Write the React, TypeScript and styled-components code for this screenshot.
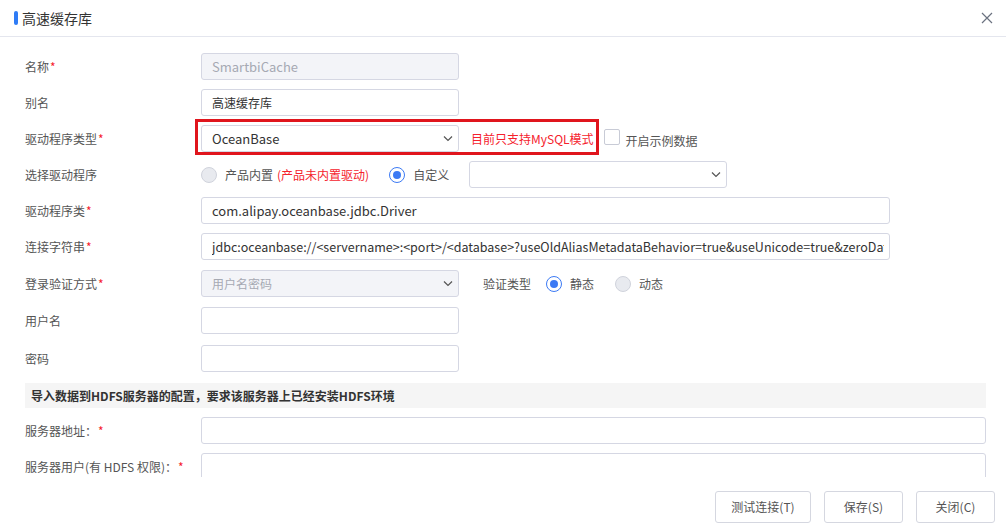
import React from "react";
import styled, { createGlobalStyle } from "styled-components";

const GlobalStyle = createGlobalStyle`
  html, body {
    margin: 0;
    padding: 0;
    background: #ffffff;
  }
  body {
    font-family: "Noto Sans CJK SC", "Noto Sans", sans-serif;
    font-size: 12px;
    color: #333;
  }
`;

const Dialog = styled.div`
  width: 1006px;
  height: 524px;
  display: flex;
  flex-direction: column;
  background: #fff;
  overflow: hidden;
`;

const Header = styled.div`
  height: 36px;
  flex: none;
  display: flex;
  align-items: center;
  justify-content: space-between;
  padding: 0 12px 0 14px;
  border-bottom: 1px solid #e4e6ee;
`;

const Title = styled.div`
  display: flex;
  align-items: center;
  gap: 4px;
  font-size: 14px;
  color: #333;
`;

const TitleBar = styled.span`
  width: 4px;
  height: 14px;
  border-radius: 2px;
  background: #2f7cf6;
`;

const CloseButton = styled.button`
  border: none;
  background: none;
  padding: 0;
  width: 14px;
  height: 14px;
  display: flex;
  align-items: center;
  justify-content: center;
  cursor: pointer;
`;

const Body = styled.div`
  flex: 1;
  overflow: hidden;
  padding: 16px 20px 0 25px;
  display: flex;
  flex-direction: column;
  gap: 9px;
`;

const Row = styled.div<{ $mt?: number }>`
  display: flex;
  align-items: center;
  height: 27px;
  flex: none;
  margin-top: ${({ $mt }) => $mt || 0}px;
`;

const Label = styled.div`
  width: 176px;
  flex: none;
  color: #555;
  font-size: 12px;
  white-space: nowrap;
`;

const Star = styled.span`
  color: #f5222d;
  margin-left: 1px;
`;

const Input = styled.div<{ $w?: number; $disabled?: boolean; $grow?: boolean; $fs?: number }>`
  box-sizing: border-box;
  height: 27px;
  width: ${({ $w, $grow }) => ($grow ? "auto" : `${$w || 258}px`)};
  flex: ${({ $grow }) => ($grow ? 1 : "none")};
  border: 1px solid #d5d7e3;
  border-radius: 3px;
  background: ${({ $disabled }) => ($disabled ? "#f3f4f8" : "#fff")};
  color: ${({ $disabled }) => ($disabled ? "#a6a9b3" : "#333")};
  padding: 0 5px 0 10px;
  display: flex;
  align-items: center;
  justify-content: space-between;
  white-space: nowrap;
  overflow: hidden;
  font-size: ${({ $fs }) => $fs || 13}px;
`;

const InputText = styled.span`
  overflow: hidden;
  text-overflow: clip;
  white-space: nowrap;
`;

const Highlight = styled.div`
  position: relative;
  display: flex;
  align-items: center;
  &::after {
    content: "";
    position: absolute;
    left: -6px;
    top: -6px;
    right: 0;
    bottom: -3px;
    border: 3px solid #e0151d;
    pointer-events: none;
  }
`;

const Notice = styled.span`
  color: #f5222d;
  margin-left: 12px;
  margin-right: 5px;
`;

const CheckBox = styled.span`
  box-sizing: border-box;
  width: 16px;
  height: 16px;
  border: 1px solid #c8cbd6;
  border-radius: 2px;
  background: #fff;
  margin-left: 5px;
  margin-top: -3px;
  flex: none;
`;

const CheckLabel = styled.span`
  margin-left: 6px;
  margin-top: 4px;
  color: #555;
`;

const Radio = styled.span<{ $checked?: boolean }>`
  box-sizing: border-box;
  width: 16px;
  height: 16px;
  border-radius: 50%;
  flex: none;
  border: 1px solid ${({ $checked }) => ($checked ? "#3c7af4" : "#d0d3dc")};
  background: ${({ $checked }) => ($checked ? "#fff" : "#e8eaef")};
  display: flex;
  align-items: center;
  justify-content: center;
  &::after {
    content: "";
    width: 8px;
    height: 8px;
    border-radius: 50%;
    background: #3c7af4;
    display: ${({ $checked }) => ($checked ? "block" : "none")};
  }
`;

const RadioText = styled.span<{ $gapAfter?: number }>`
  margin-left: 8px;
  margin-right: ${({ $gapAfter }) => $gapAfter || 0}px;
  color: #555;
  white-space: nowrap;
`;

const RedText = styled.span`
  color: #f5222d;
  margin-left: 4px;
`;

const SideLabel = styled.span`
  margin-left: 24px;
  margin-right: 15px;
  color: #555;
`;

const Section = styled.div`
  height: 25px;
  flex: none;
  margin-top: 2px;
  background: #f5f5f5;
  padding-left: 6px;
  display: flex;
  align-items: center;
  font-weight: bold;
  color: #333;
  font-size: 12px;
`;

const Footer = styled.div`
  height: 47px;
  flex: none;
  display: flex;
  align-items: center;
  justify-content: flex-end;
  gap: 13px;
  padding: 0 11px 0 0;
`;

const Button = styled.button<{ $w: number }>`
  box-sizing: border-box;
  width: ${({ $w }) => $w}px;
  height: 32px;
  border: 1px solid #d5d7e0;
  border-radius: 3px;
  background: #fff;
  color: #555;
  font-family: "Noto Sans CJK SC", "Noto Sans", sans-serif;
  font-size: 12px;
  margin-top: 12px;
`;

const Chevron = () => (
  <svg width="10" height="7" viewBox="0 0 10 7">
    <path d="M1 1.5 L5 5.5 L9 1.5" fill="none" stroke="#555" strokeWidth="1.2" />
  </svg>
);

const XIcon = () => (
  <svg width="12" height="12" viewBox="0 0 12 12">
    <path d="M1 1 L11 11 M11 1 L1 11" stroke="#6b7280" strokeWidth="1.2" />
  </svg>
);

export default function App() {
  return (
    <>
      <GlobalStyle />
      <Dialog>
        <Header>
          <Title>
            <TitleBar />
            高速缓存库
          </Title>
          <CloseButton>
            <XIcon />
          </CloseButton>
        </Header>
        <Body>
          <Row>
            <Label>
              名称<Star>*</Star>
            </Label>
            <Input $disabled>SmartbiCache</Input>
          </Row>
          <Row>
            <Label>别名</Label>
            <Input $fs={12}>高速缓存库</Input>
          </Row>
          <Row>
            <Label>
              驱动程序类型<Star>*</Star>
            </Label>
            <Highlight>
              <Input>
                OceanBase
                <Chevron />
              </Input>
              <Notice>目前只支持MySQL模式</Notice>
            </Highlight>
            <CheckBox />
            <CheckLabel>开启示例数据</CheckLabel>
          </Row>
          <Row>
            <Label>选择驱动程序</Label>
            <Radio />
            <RadioText $gapAfter={20}>
              产品内置<RedText>(产品未内置驱动)</RedText>
            </RadioText>
            <Radio $checked />
            <RadioText $gapAfter={20}>自定义</RadioText>
            <Input>
              <span />
              <Chevron />
            </Input>
          </Row>
          <Row>
            <Label>
              驱动程序类<Star>*</Star>
            </Label>
            <Input $w={689}>com.alipay.oceanbase.jdbc.Driver</Input>
          </Row>
          <Row>
            <Label>
              连接字符串<Star>*</Star>
            </Label>
            <Input $w={689} $fs={12.5}>
              <InputText>
                jdbc:oceanbase://&lt;servername&gt;:&lt;port&gt;/&lt;database&gt;?useOldAliasMetadataBehavior=true&amp;useUnicode=true&amp;zeroDateTimeBehavior=convertToNull
              </InputText>
            </Input>
          </Row>
          <Row $mt={1}>
            <Label>
              登录验证方式<Star>*</Star>
            </Label>
            <Input $disabled $fs={12}>
              用户名密码
              <Chevron />
            </Input>
            <SideLabel>验证类型</SideLabel>
            <Radio $checked />
            <RadioText $gapAfter={21}>静态</RadioText>
            <Radio />
            <RadioText>动态</RadioText>
          </Row>
          <Row $mt={1}>
            <Label>用户名</Label>
            <Input />
          </Row>
          <Row $mt={2}>
            <Label>密码</Label>
            <Input />
          </Row>
          <Section>导入数据到HDFS服务器的配置，要求该服务器上已经安装HDFS环境</Section>
          <Row>
            <Label>
              服务器地址：<Star>*</Star>
            </Label>
            <Input $grow />
          </Row>
          <Row>
            <Label>
              服务器用户(有 HDFS 权限)：<Star>*</Star>
            </Label>
            <Input $grow />
          </Row>
        </Body>
        <Footer>
          <Button $w={96}>测试连接(T)</Button>
          <Button $w={79}>保存(S)</Button>
          <Button $w={79}>关闭(C)</Button>
        </Footer>
      </Dialog>
    </>
  );
}
